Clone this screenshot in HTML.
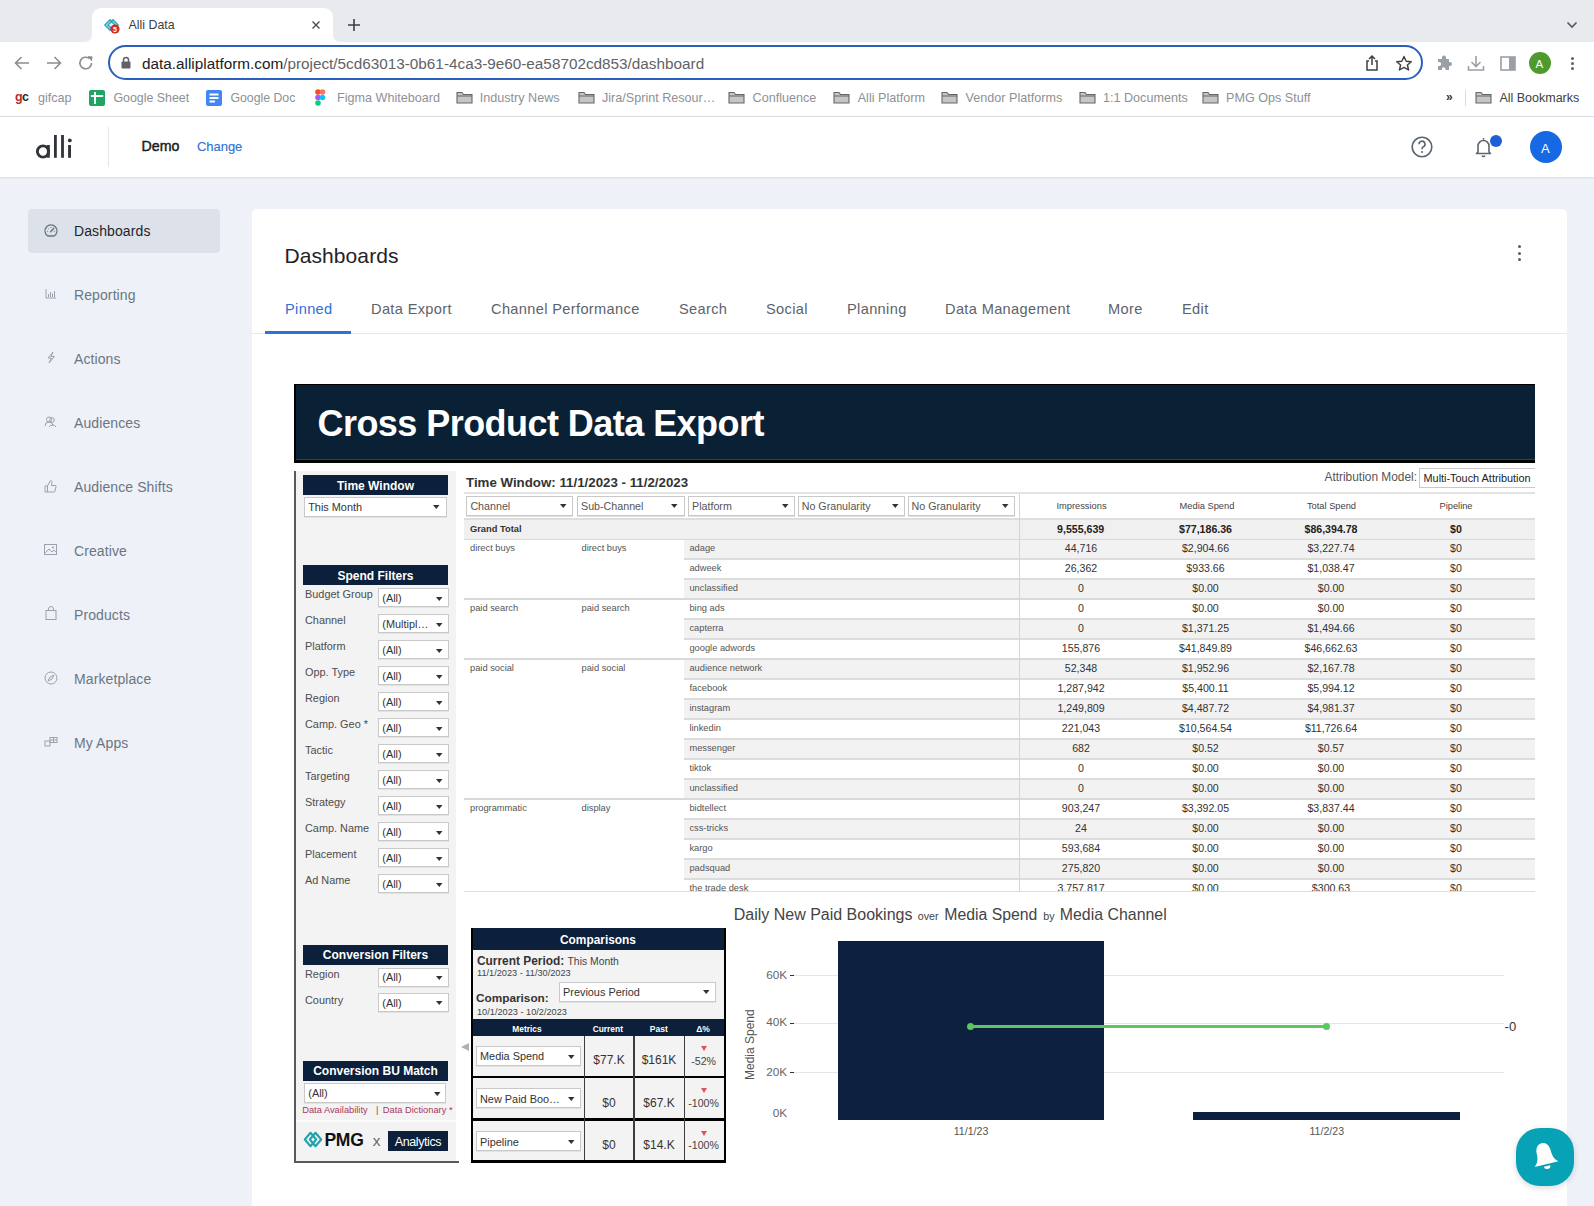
<!DOCTYPE html>
<html><head><meta charset="utf-8"><title>Alli Data</title><style>*{box-sizing:border-box;margin:0;padding:0}
html,body{width:1594px;height:1206px;overflow:hidden;background:#eef1f7;font-family:"Liberation Sans",sans-serif;position:relative}
.a{position:absolute}
.t{position:absolute;white-space:nowrap;line-height:1}
svg.a{overflow:visible}</style></head><body>
<div class="a" style="left:0px;top:0px;width:1594px;height:42px;background:#e8eaed"></div>
<div class="a" style="left:92px;top:8px;width:241px;height:34px;background:#fff;border-radius:9px 9px 0 0"></div>
<svg class="a" style="left:84px;top:34px;" width="8" height="8" viewBox="0 0 8 8"><path d="M0 8 Q8 8 8 0 L8 8 Z" fill="#fff"/></svg>
<svg class="a" style="left:333px;top:34px;" width="8" height="8" viewBox="0 0 8 8"><path d="M8 8 Q0 8 0 0 L0 8 Z" fill="#fff"/></svg>
<svg class="a" style="left:103px;top:18px;" width="18" height="16" viewBox="0 0 18 16"><g fill="none" stroke="#2aa7b8" stroke-width="1.6"><path d="M2 7 L7 2 L12 7 L7 12 Z"/><path d="M5 7 L10 2 L15 7 L10 12 Z"/></g><circle cx="12" cy="11" r="4.6" fill="#d22a2a"/><text x="12" y="14" font-size="7" font-family="Liberation Sans" font-weight="bold" fill="#fff" text-anchor="middle">5</text></svg>
<div class="t " style="left:128.5px;top:19.10px;font-size:12.4px;color:#3c4043;">Alli Data</div>
<svg class="a" style="left:311px;top:20px;" width="10" height="10" viewBox="0 0 10 10"><path d="M1.5 1.5 L8.5 8.5 M8.5 1.5 L1.5 8.5" stroke="#4a4d51" stroke-width="1.4"/></svg>
<svg class="a" style="left:347px;top:18px;" width="14" height="14" viewBox="0 0 14 14"><path d="M7 1 V13 M1 7 H13" stroke="#3c4043" stroke-width="1.6"/></svg>
<svg class="a" style="left:1566px;top:20px;" width="12" height="10" viewBox="0 0 12 10"><path d="M1.5 2.5 L6 7 L10.5 2.5" fill="none" stroke="#55595e" stroke-width="1.6"/></svg>
<div class="a" style="left:0px;top:42px;width:1594px;height:38px;background:#fff"></div>
<svg class="a" style="left:13px;top:55px;" width="17" height="16" viewBox="0 0 17 16"><path d="M16 8 H2.5 M8.5 2 L2.5 8 L8.5 14" fill="none" stroke="#8a8d91" stroke-width="1.6"/></svg>
<svg class="a" style="left:46px;top:55px;" width="17" height="16" viewBox="0 0 17 16"><path d="M1 8 H14.5 M8.5 2 L14.5 8 L8.5 14" fill="none" stroke="#8a8d91" stroke-width="1.6"/></svg>
<svg class="a" style="left:78px;top:55px;" width="17" height="16" viewBox="0 0 17 16"><path d="M13.5 8 A5.8 5.8 0 1 1 11.6 3.7" fill="none" stroke="#8a8d91" stroke-width="1.6"/><path d="M9.5 1 L14.5 1.5 L14 6.5 Z" fill="#8a8d91"/></svg>
<div class="a" style="left:108px;top:45px;width:1315px;height:35px;border:2px solid #2a5fbd;border-radius:18px;background:#fff"></div>
<svg class="a" style="left:120px;top:56px;" width="12" height="13" viewBox="0 0 12 13"><rect x="1.5" y="5.5" width="9" height="7" rx="1" fill="#5f6368"/><path d="M3.5 6 V4 A2.5 2.5 0 0 1 8.5 4 V6" fill="none" stroke="#5f6368" stroke-width="1.5"/></svg>
<div class="t " style="left:142px;top:55.65px;font-size:15.3px;color:#202124;">data.alliplatform.com<span style="color:#5f6368">/project/5cd63013-0b61-4ca3-9e60-ea58702cd853/dashboard</span></div>
<svg class="a" style="left:1364px;top:54px;" width="16" height="18" viewBox="0 0 16 18"><path d="M5 7 H3 V16 H13 V7 H11" fill="none" stroke="#3c4043" stroke-width="1.5"/><path d="M8 11 V2 M5 5 L8 2 L11 5" fill="none" stroke="#3c4043" stroke-width="1.5"/></svg>
<svg class="a" style="left:1395px;top:55px;" width="18" height="16" viewBox="0 0 18 16"><path d="M9 1.5 L11.2 6.2 L16.3 6.7 L12.4 10 L13.6 15 L9 12.4 L4.4 15 L5.6 10 L1.7 6.7 L6.8 6.2 Z" fill="none" stroke="#3c4043" stroke-width="1.4" stroke-linejoin="round"/></svg>
<svg class="a" style="left:1436px;top:55px;" width="17" height="17" viewBox="0 0 17 17"><path d="M6 2.5 a2 2 0 0 1 4 0 V4 H13 V7 h1 a2 2 0 0 1 0 4 h-1 V15 H9.5 v-1 a1.8 1.8 0 0 0 -3.6 0 v1 H2 V11 h1.2 a2 2 0 0 0 0 -4 H2 V4 H6 Z" fill="#9aa0a6"/></svg>
<svg class="a" style="left:1466px;top:54px;" width="20" height="18" viewBox="0 0 20 18"><path d="M10 2 V12 M5.5 8 L10 12.5 L14.5 8" fill="none" stroke="#9aa0a6" stroke-width="1.6"/><path d="M2.5 12 V16 H17.5 V12" fill="none" stroke="#9aa0a6" stroke-width="1.6"/></svg>
<svg class="a" style="left:1500px;top:56px;" width="16" height="15" viewBox="0 0 16 15"><rect x="1" y="1" width="14" height="13" fill="none" stroke="#9aa0a6" stroke-width="1.6"/><rect x="9" y="1" width="6" height="13" fill="#9aa0a6"/></svg>
<div class="a" style="left:1529px;top:52px;width:22px;height:22px;border-radius:50%;background:#4f9a2c"></div>
<div class="t " style="left:1535.5px;top:58.87px;font-size:11.5px;color:#fff;">A</div>
<div class="a" style="left:1571px;top:57px;width:3px;height:3px;background:#5f6368;border-radius:50%"></div>
<div class="a" style="left:1571px;top:62px;width:3px;height:3px;background:#5f6368;border-radius:50%"></div>
<div class="a" style="left:1571px;top:67px;width:3px;height:3px;background:#5f6368;border-radius:50%"></div>
<div class="a" style="left:0px;top:80px;width:1594px;height:36px;background:#fff"></div>
<div class="a" style="left:0px;top:116px;width:1594px;height:1px;background:#dadce0"></div>
<div class="t" style="left:15px;top:90.6px;font-size:12.5px;font-weight:bold;color:#b52a30;letter-spacing:-0.6px">g<span style="color:#2a2a2a">c</span></div>
<div class="t " style="left:38px;top:91.93px;font-size:12.6px;color:#8d9196;">gifcap</div>
<svg class="a" style="left:89px;top:90px;" width="16" height="16" viewBox="0 0 16 16"><rect x="0" y="0" width="16" height="16" rx="2" fill="#1fa463"/><path d="M1.8 6 H14.2 M6 2 V14" stroke="#fff" stroke-width="1.9"/></svg>
<div class="t " style="left:113.4px;top:92.10px;font-size:12.4px;color:#8d9196;">Google Sheet</div>
<svg class="a" style="left:206px;top:90px;" width="16" height="16" viewBox="0 0 16 16"><rect x="0" y="0" width="16" height="16" rx="2" fill="#4285f4"/><path d="M3.5 4.5 H12.5 M3.5 8 H12.5 M3.5 11.5 H9" stroke="#fff" stroke-width="1.8"/></svg>
<div class="t " style="left:230.4px;top:92.19px;font-size:12.3px;color:#8d9196;">Google Doc</div>
<svg class="a" style="left:315px;top:89px;" width="11" height="17" viewBox="0 0 11 17"><circle cx="3" cy="3" r="2.8" fill="#f24e1e"/><circle cx="7.5" cy="3" r="2.8" fill="#ff7262"/><circle cx="3" cy="8.5" r="2.8" fill="#a259ff"/><circle cx="7.5" cy="8.5" r="2.8" fill="#1abcfe"/><circle cx="3" cy="14" r="2.8" fill="#0acf83"/></svg>
<div class="t " style="left:337px;top:91.93px;font-size:12.6px;color:#8d9196;">Figma Whiteboard</div>
<svg class="a" style="left:455.7px;top:91px;" width="17" height="13" viewBox="0 0 17 13"><path d="M1 1.5 H6 L7.5 3.5 H16 V12 H1 Z" fill="#c6c6c6" stroke="#666" stroke-width="1.1"/><path d="M1 5 H16" stroke="#666" stroke-width="1"/></svg>
<div class="t " style="left:479.8px;top:91.93px;font-size:12.6px;color:#8d9196;">Industry News</div>
<svg class="a" style="left:577.7px;top:91px;" width="17" height="13" viewBox="0 0 17 13"><path d="M1 1.5 H6 L7.5 3.5 H16 V12 H1 Z" fill="#c6c6c6" stroke="#666" stroke-width="1.1"/><path d="M1 5 H16" stroke="#666" stroke-width="1"/></svg>
<div class="t " style="left:602px;top:91.93px;font-size:12.6px;color:#8d9196;">Jira/Sprint Resour…</div>
<svg class="a" style="left:728.2px;top:91px;" width="17" height="13" viewBox="0 0 17 13"><path d="M1 1.5 H6 L7.5 3.5 H16 V12 H1 Z" fill="#c6c6c6" stroke="#666" stroke-width="1.1"/><path d="M1 5 H16" stroke="#666" stroke-width="1"/></svg>
<div class="t " style="left:752.6px;top:91.93px;font-size:12.6px;color:#8d9196;">Confluence</div>
<svg class="a" style="left:833.4px;top:91px;" width="17" height="13" viewBox="0 0 17 13"><path d="M1 1.5 H6 L7.5 3.5 H16 V12 H1 Z" fill="#c6c6c6" stroke="#666" stroke-width="1.1"/><path d="M1 5 H16" stroke="#666" stroke-width="1"/></svg>
<div class="t " style="left:857.7px;top:91.93px;font-size:12.6px;color:#8d9196;">Alli Platform</div>
<svg class="a" style="left:941px;top:91px;" width="17" height="13" viewBox="0 0 17 13"><path d="M1 1.5 H6 L7.5 3.5 H16 V12 H1 Z" fill="#c6c6c6" stroke="#666" stroke-width="1.1"/><path d="M1 5 H16" stroke="#666" stroke-width="1"/></svg>
<div class="t " style="left:965.6px;top:91.93px;font-size:12.6px;color:#8d9196;">Vendor Platforms</div>
<svg class="a" style="left:1079px;top:91px;" width="17" height="13" viewBox="0 0 17 13"><path d="M1 1.5 H6 L7.5 3.5 H16 V12 H1 Z" fill="#c6c6c6" stroke="#666" stroke-width="1.1"/><path d="M1 5 H16" stroke="#666" stroke-width="1"/></svg>
<div class="t " style="left:1103px;top:91.93px;font-size:12.6px;color:#8d9196;">1:1 Documents</div>
<svg class="a" style="left:1202px;top:91px;" width="17" height="13" viewBox="0 0 17 13"><path d="M1 1.5 H6 L7.5 3.5 H16 V12 H1 Z" fill="#c6c6c6" stroke="#666" stroke-width="1.1"/><path d="M1 5 H16" stroke="#666" stroke-width="1"/></svg>
<div class="t " style="left:1226px;top:91.93px;font-size:12.6px;color:#8d9196;">PMG Ops Stuff</div>
<div class="t " style="left:1446px;top:91.44px;font-size:12px;color:#333;font-weight:bold;">»</div>
<div class="a" style="left:1465px;top:90px;width:1px;height:16px;background:#dadce0"></div>
<svg class="a" style="left:1474.5px;top:91px;" width="17" height="13" viewBox="0 0 17 13"><path d="M1 1.5 H6 L7.5 3.5 H16 V12 H1 Z" fill="#c6c6c6" stroke="#666" stroke-width="1.1"/><path d="M1 5 H16" stroke="#666" stroke-width="1"/></svg>
<div class="t " style="left:1499.4px;top:92.02px;font-size:12.5px;color:#3c4043;">All Bookmarks</div>
<div class="a" style="left:0px;top:117px;width:1594px;height:60px;background:#fff"></div>
<div class="a" style="left:0px;top:177px;width:1594px;height:1px;background:#dfe2e8"></div>
<div class="a" style="left:0px;top:178px;width:1594px;height:1px;background:#e7eaf0"></div>
<svg class="a" style="left:34px;top:133px;" width="40" height="27" viewBox="0 0 40 27"><circle cx="9" cy="18.5" r="5.6" fill="none" stroke="#30353b" stroke-width="2.9"/><rect x="12.9" y="12" width="2.9" height="12.7" fill="#30353b"/><rect x="20" y="2" width="2.8" height="22.8" fill="#30353b"/><rect x="27.1" y="2" width="2.8" height="22.8" fill="#30353b"/><rect x="34.1" y="12" width="2.9" height="12.8" fill="#30353b"/><circle cx="35.8" cy="7.4" r="1.9" fill="#30353b"/></svg>
<div class="a" style="left:108px;top:127px;width:1px;height:40px;background:#e3e5ea"></div>
<div class="t " style="left:141.5px;top:138.78px;font-size:14.2px;color:#1a1d22;-webkit-text-stroke:0.45px #1a1d22">Demo</div>
<div class="t " style="left:197px;top:139.80px;font-size:13px;color:#3173d6;letter-spacing:-0.05px;-webkit-text-stroke:0.15px #3173d6">Change</div>
<svg class="a" style="left:1411px;top:136px;" width="22" height="22" viewBox="0 0 22 22"><circle cx="11" cy="11" r="9.8" fill="none" stroke="#5c6670" stroke-width="1.6"/><path d="M8 8.3 A3 3 0 1 1 12 11 Q11 11.6 11 13.2" fill="none" stroke="#5c6670" stroke-width="1.6"/><circle cx="11" cy="16" r="1" fill="#5c6670"/></svg>
<svg class="a" style="left:1475px;top:136px;" width="17" height="23" viewBox="0 0 17 23"><path d="M8.5 2 V3.5 M3 16 V10 A5.5 5.5 0 0 1 14 10 V16 L15.5 17.5 H1.5 Z" fill="none" stroke="#5c6670" stroke-width="1.6" stroke-linejoin="round"/><path d="M7 19.5 A1.6 1.6 0 0 0 10 19.5" fill="none" stroke="#5c6670" stroke-width="1.5"/></svg>
<div class="a" style="left:1490px;top:135px;width:12px;height:12px;border-radius:50%;background:#1f5fd6"></div>
<div class="a" style="left:1530px;top:131px;width:32px;height:32px;border-radius:50%;background:#1668e3"></div>
<div class="t " style="left:1541px;top:141.60px;font-size:13px;color:#fff;">A</div>
<div class="a" style="left:28px;top:209px;width:192px;height:44px;background:#dde2ea;border-radius:4px"></div>
<div class="t " style="left:74px;top:223.75px;font-size:14px;color:#1f242b;letter-spacing:0.1px">Dashboards</div>
<div class="t " style="left:74px;top:287.75px;font-size:14px;color:#6b7683;letter-spacing:0.1px">Reporting</div>
<div class="t " style="left:74px;top:351.75px;font-size:14px;color:#6b7683;letter-spacing:0.1px">Actions</div>
<div class="t " style="left:74px;top:415.75px;font-size:14px;color:#6b7683;letter-spacing:0.1px">Audiences</div>
<div class="t " style="left:74px;top:479.75px;font-size:14px;color:#6b7683;letter-spacing:0.1px">Audience Shifts</div>
<div class="t " style="left:74px;top:543.75px;font-size:14px;color:#6b7683;letter-spacing:0.1px">Creative</div>
<div class="t " style="left:74px;top:607.75px;font-size:14px;color:#6b7683;letter-spacing:0.1px">Products</div>
<div class="t " style="left:74px;top:671.75px;font-size:14px;color:#6b7683;letter-spacing:0.1px">Marketplace</div>
<div class="t " style="left:74px;top:735.75px;font-size:14px;color:#6b7683;letter-spacing:0.1px">My Apps</div>
<svg class="a" style="left:44px;top:223px;" width="14" height="15" viewBox="0 0 14 15"><path d="M3.9 13 A6 6 0 1 1 10.1 13 Z" fill="none" stroke="#6b7480" stroke-width="1.3" stroke-linejoin="round"/><path d="M6.8 8.6 L9.6 5.4" stroke="#6b7480" stroke-width="1.5" stroke-linecap="round"/><path d="M3.2 8.4 H4.2 M9.8 8.4 H10.8 M4.4 5.6 L5 6.2 M7 4 V4.8" stroke="#6b7480" stroke-width="0.9"/></svg>
<svg class="a" style="left:45px;top:288px;" width="12" height="11" viewBox="0 0 12 11"><path d="M1 1 V10 H11 M3.5 9 V6 M5.5 9 V4 M7.5 9 V5.5 M9.5 9 V3" fill="none" stroke="#9aa3ad" stroke-width="1"/></svg>
<svg class="a" style="left:46px;top:351px;" width="10" height="13" viewBox="0 0 10 13"><path d="M7 1 L2 7 H5.5 L3 12 L8.5 5.5 H5 Z" fill="none" stroke="#9aa3ad" stroke-width="1"/></svg>
<svg class="a" style="left:44px;top:415px;" width="13" height="13" viewBox="0 0 13 13"><circle cx="5" cy="4.5" r="2.5" fill="none" stroke="#9aa3ad" stroke-width="1"/><path d="M1 11 A4 4 0 0 1 9 11" fill="none" stroke="#9aa3ad" stroke-width="1"/><circle cx="8" cy="5" r="2.3" fill="none" stroke="#9aa3ad" stroke-width="1"/><path d="M5 12 A4 4 0 0 1 12 12" fill="none" stroke="#9aa3ad" stroke-width="1"/></svg>
<svg class="a" style="left:44px;top:479px;" width="13" height="14" viewBox="0 0 13 14"><path d="M1 7 H3.5 V13 H1 Z M3.5 7 L6 2 A1.2 1.2 0 0 1 8 3 L7.5 6.5 H11 A1 1 0 0 1 12 7.8 L11 12 A1.2 1.2 0 0 1 10 13 H3.5" fill="none" stroke="#9aa3ad" stroke-width="1"/></svg>
<svg class="a" style="left:44px;top:543px;" width="13" height="12" viewBox="0 0 13 12"><rect x="0.5" y="1.5" width="12" height="10" fill="none" stroke="#9aa3ad" stroke-width="1"/><path d="M1 10 L5 6 L8 9 L10 7 L12.5 9.5" fill="none" stroke="#9aa3ad" stroke-width="1"/><circle cx="9" cy="4.5" r="1" fill="#9aa3ad"/></svg>
<svg class="a" style="left:45px;top:606px;" width="12" height="14" viewBox="0 0 12 14"><rect x="1" y="4.5" width="10" height="9" fill="none" stroke="#9aa3ad" stroke-width="1"/><path d="M3.5 4.5 V3 A2.5 2.5 0 0 1 8.5 3 V4.5" fill="none" stroke="#9aa3ad" stroke-width="1"/></svg>
<svg class="a" style="left:44px;top:671px;" width="14" height="14" viewBox="0 0 14 14"><circle cx="7" cy="7" r="6" fill="none" stroke="#9aa3ad" stroke-width="1"/><path d="M10 4 L8 8 L4 10 L6 6 Z" fill="none" stroke="#9aa3ad" stroke-width="1"/></svg>
<svg class="a" style="left:44px;top:736px;" width="14" height="12" viewBox="0 0 14 12"><rect x="1" y="5" width="5" height="5" fill="none" stroke="#9aa3ad" stroke-width="1"/><rect x="6" y="1.5" width="7" height="5" fill="none" stroke="#9aa3ad" stroke-width="1"/><path d="M9.5 1.5 V6.5 M6 4 H13" stroke="#9aa3ad" stroke-width="1"/></svg>
<div class="a" style="left:252px;top:209px;width:1315px;height:1010px;background:#fff;border-radius:5px"></div>
<div class="t " style="left:284.4px;top:244.62px;font-size:21px;color:#1f2329;letter-spacing:0.1px">Dashboards</div>
<div class="t " style="left:285px;top:302.24px;font-size:14.6px;color:#2f6fd6;letter-spacing:0.35px">Pinned</div>
<div class="t " style="left:371px;top:302.24px;font-size:14.6px;color:#5d636b;letter-spacing:0.35px">Data Export</div>
<div class="t " style="left:491px;top:302.24px;font-size:14.6px;color:#5d636b;letter-spacing:0.35px">Channel Performance</div>
<div class="t " style="left:679px;top:302.24px;font-size:14.6px;color:#5d636b;letter-spacing:0.35px">Search</div>
<div class="t " style="left:766px;top:302.24px;font-size:14.6px;color:#5d636b;letter-spacing:0.35px">Social</div>
<div class="t " style="left:847px;top:302.24px;font-size:14.6px;color:#5d636b;letter-spacing:0.35px">Planning</div>
<div class="t " style="left:945px;top:302.24px;font-size:14.6px;color:#5d636b;letter-spacing:0.35px">Data Management</div>
<div class="t " style="left:1108px;top:302.24px;font-size:14.6px;color:#5d636b;letter-spacing:0.35px">More</div>
<div class="t " style="left:1182px;top:302.24px;font-size:14.6px;color:#5d636b;letter-spacing:0.35px">Edit</div>
<div class="a" style="left:252px;top:333px;width:1315px;height:1px;background:#e6e8ec"></div>
<div class="a" style="left:265px;top:331px;width:86px;height:3px;background:#2f6fd6"></div>
<div class="a" style="left:1517.5px;top:244.5px;width:3px;height:3px;background:#555c66;border-radius:50%"></div>
<div class="a" style="left:1517.5px;top:251.5px;width:3px;height:3px;background:#555c66;border-radius:50%"></div>
<div class="a" style="left:1517.5px;top:257.5px;width:3px;height:3px;background:#555c66;border-radius:50%"></div>
<div class="a" style="left:294px;top:384px;width:1241px;height:79px;background:#000"></div>
<div class="a" style="left:296px;top:385px;width:1239px;height:74px;background:#0a2135"></div>
<div class="a" style="left:296px;top:459px;width:1239px;height:1px;background:#3b4046"></div>
<div class="t " style="left:317.5px;top:405.93px;font-size:36px;color:#fff;font-weight:bold;letter-spacing:-0.55px">Cross Product Data Export</div>
<div class="a" style="left:296px;top:471px;width:160px;height:690px;background:#f3f3f3"></div>
<div class="a" style="left:294px;top:471px;width:2px;height:692px;background:#5a5a5a"></div>
<div class="a" style="left:294px;top:1161px;width:165px;height:2px;background:#5a5a5a"></div>
<div class="a" style="left:303px;top:475px;width:145px;height:20px;background:#0d203b"></div>
<div class="t" style="left:75.5px;width:600px;text-align:center;top:479.94px;font-size:12px;color:#fff;font-weight:bold;">Time Window</div>
<div class="a" style="left:304px;top:497px;width:143px;height:19.5px;background:#fff;border:1px solid #c9c9c9;box-shadow:0 1px 0 #e2e2e2"></div>
<div class="t " style="left:308.2px;top:501.67px;font-size:10.9px;color:#333;">This Month</div>
<svg class="a" style="left:433.35px;top:505.4px;" width="6.5" height="4" viewBox="0 0 6.5 4"><path d="M0 0 H6.5 L3.25 4 Z" fill="#333"/></svg>
<div class="a" style="left:303px;top:565px;width:145px;height:20px;background:#0d203b"></div>
<div class="t" style="left:75.5px;width:600px;text-align:center;top:569.74px;font-size:12px;color:#fff;font-weight:bold;">Spend Filters</div>
<div class="t " style="left:305px;top:589.27px;font-size:10.9px;color:#4d4d4d;">Budget Group</div>
<div class="a" style="left:378px;top:588.2px;width:70.5px;height:19px;background:#fff;border:1px solid #c9c9c9;box-shadow:0 1px 0 #e2e2e2"></div>
<div class="t " style="left:382.3px;top:592.97px;font-size:10.9px;color:#333;">(All)</div>
<svg class="a" style="left:435.75px;top:596.6px;" width="6.5" height="4" viewBox="0 0 6.5 4"><path d="M0 0 H6.5 L3.25 4 Z" fill="#333"/></svg>
<div class="t " style="left:305px;top:615.27px;font-size:10.9px;color:#4d4d4d;">Channel</div>
<div class="a" style="left:378px;top:614.2px;width:70.5px;height:19px;background:#fff;border:1px solid #c9c9c9;box-shadow:0 1px 0 #e2e2e2"></div>
<div class="t " style="left:382.3px;top:618.97px;font-size:10.9px;color:#333;">(Multipl…</div>
<svg class="a" style="left:435.75px;top:622.6px;" width="6.5" height="4" viewBox="0 0 6.5 4"><path d="M0 0 H6.5 L3.25 4 Z" fill="#333"/></svg>
<div class="t " style="left:305px;top:641.27px;font-size:10.9px;color:#4d4d4d;">Platform</div>
<div class="a" style="left:378px;top:640.2px;width:70.5px;height:19px;background:#fff;border:1px solid #c9c9c9;box-shadow:0 1px 0 #e2e2e2"></div>
<div class="t " style="left:382.3px;top:644.97px;font-size:10.9px;color:#333;">(All)</div>
<svg class="a" style="left:435.75px;top:648.6px;" width="6.5" height="4" viewBox="0 0 6.5 4"><path d="M0 0 H6.5 L3.25 4 Z" fill="#333"/></svg>
<div class="t " style="left:305px;top:667.27px;font-size:10.9px;color:#4d4d4d;">Opp. Type</div>
<div class="a" style="left:378px;top:666.2px;width:70.5px;height:19px;background:#fff;border:1px solid #c9c9c9;box-shadow:0 1px 0 #e2e2e2"></div>
<div class="t " style="left:382.3px;top:670.97px;font-size:10.9px;color:#333;">(All)</div>
<svg class="a" style="left:435.75px;top:674.6px;" width="6.5" height="4" viewBox="0 0 6.5 4"><path d="M0 0 H6.5 L3.25 4 Z" fill="#333"/></svg>
<div class="t " style="left:305px;top:693.27px;font-size:10.9px;color:#4d4d4d;">Region</div>
<div class="a" style="left:378px;top:692.2px;width:70.5px;height:19px;background:#fff;border:1px solid #c9c9c9;box-shadow:0 1px 0 #e2e2e2"></div>
<div class="t " style="left:382.3px;top:696.97px;font-size:10.9px;color:#333;">(All)</div>
<svg class="a" style="left:435.75px;top:700.6px;" width="6.5" height="4" viewBox="0 0 6.5 4"><path d="M0 0 H6.5 L3.25 4 Z" fill="#333"/></svg>
<div class="t " style="left:305px;top:719.27px;font-size:10.9px;color:#4d4d4d;">Camp. Geo *</div>
<div class="a" style="left:378px;top:718.2px;width:70.5px;height:19px;background:#fff;border:1px solid #c9c9c9;box-shadow:0 1px 0 #e2e2e2"></div>
<div class="t " style="left:382.3px;top:722.97px;font-size:10.9px;color:#333;">(All)</div>
<svg class="a" style="left:435.75px;top:726.6px;" width="6.5" height="4" viewBox="0 0 6.5 4"><path d="M0 0 H6.5 L3.25 4 Z" fill="#333"/></svg>
<div class="t " style="left:305px;top:745.27px;font-size:10.9px;color:#4d4d4d;">Tactic</div>
<div class="a" style="left:378px;top:744.2px;width:70.5px;height:19px;background:#fff;border:1px solid #c9c9c9;box-shadow:0 1px 0 #e2e2e2"></div>
<div class="t " style="left:382.3px;top:748.97px;font-size:10.9px;color:#333;">(All)</div>
<svg class="a" style="left:435.75px;top:752.6px;" width="6.5" height="4" viewBox="0 0 6.5 4"><path d="M0 0 H6.5 L3.25 4 Z" fill="#333"/></svg>
<div class="t " style="left:305px;top:771.27px;font-size:10.9px;color:#4d4d4d;">Targeting</div>
<div class="a" style="left:378px;top:770.2px;width:70.5px;height:19px;background:#fff;border:1px solid #c9c9c9;box-shadow:0 1px 0 #e2e2e2"></div>
<div class="t " style="left:382.3px;top:774.97px;font-size:10.9px;color:#333;">(All)</div>
<svg class="a" style="left:435.75px;top:778.6px;" width="6.5" height="4" viewBox="0 0 6.5 4"><path d="M0 0 H6.5 L3.25 4 Z" fill="#333"/></svg>
<div class="t " style="left:305px;top:797.27px;font-size:10.9px;color:#4d4d4d;">Strategy</div>
<div class="a" style="left:378px;top:796.2px;width:70.5px;height:19px;background:#fff;border:1px solid #c9c9c9;box-shadow:0 1px 0 #e2e2e2"></div>
<div class="t " style="left:382.3px;top:800.97px;font-size:10.9px;color:#333;">(All)</div>
<svg class="a" style="left:435.75px;top:804.6px;" width="6.5" height="4" viewBox="0 0 6.5 4"><path d="M0 0 H6.5 L3.25 4 Z" fill="#333"/></svg>
<div class="t " style="left:305px;top:823.27px;font-size:10.9px;color:#4d4d4d;">Camp. Name</div>
<div class="a" style="left:378px;top:822.2px;width:70.5px;height:19px;background:#fff;border:1px solid #c9c9c9;box-shadow:0 1px 0 #e2e2e2"></div>
<div class="t " style="left:382.3px;top:826.97px;font-size:10.9px;color:#333;">(All)</div>
<svg class="a" style="left:435.75px;top:830.6px;" width="6.5" height="4" viewBox="0 0 6.5 4"><path d="M0 0 H6.5 L3.25 4 Z" fill="#333"/></svg>
<div class="t " style="left:305px;top:849.27px;font-size:10.9px;color:#4d4d4d;">Placement</div>
<div class="a" style="left:378px;top:848.2px;width:70.5px;height:19px;background:#fff;border:1px solid #c9c9c9;box-shadow:0 1px 0 #e2e2e2"></div>
<div class="t " style="left:382.3px;top:852.97px;font-size:10.9px;color:#333;">(All)</div>
<svg class="a" style="left:435.75px;top:856.6px;" width="6.5" height="4" viewBox="0 0 6.5 4"><path d="M0 0 H6.5 L3.25 4 Z" fill="#333"/></svg>
<div class="t " style="left:305px;top:875.27px;font-size:10.9px;color:#4d4d4d;">Ad Name</div>
<div class="a" style="left:378px;top:874.2px;width:70.5px;height:19px;background:#fff;border:1px solid #c9c9c9;box-shadow:0 1px 0 #e2e2e2"></div>
<div class="t " style="left:382.3px;top:878.97px;font-size:10.9px;color:#333;">(All)</div>
<svg class="a" style="left:435.75px;top:882.6px;" width="6.5" height="4" viewBox="0 0 6.5 4"><path d="M0 0 H6.5 L3.25 4 Z" fill="#333"/></svg>
<div class="a" style="left:303px;top:945px;width:145px;height:20px;background:#0d203b"></div>
<div class="t" style="left:75.5px;width:600px;text-align:center;top:949.24px;font-size:12px;color:#fff;font-weight:bold;">Conversion Filters</div>
<div class="t " style="left:305px;top:968.77px;font-size:10.9px;color:#4d4d4d;">Region</div>
<div class="a" style="left:378px;top:967.7px;width:70.5px;height:19px;background:#fff;border:1px solid #c9c9c9;box-shadow:0 1px 0 #e2e2e2"></div>
<div class="t " style="left:382.3px;top:972.47px;font-size:10.9px;color:#333;">(All)</div>
<svg class="a" style="left:435.75px;top:975.8px;" width="6.5" height="4" viewBox="0 0 6.5 4"><path d="M0 0 H6.5 L3.25 4 Z" fill="#333"/></svg>
<div class="t " style="left:305px;top:994.67px;font-size:10.9px;color:#4d4d4d;">Country</div>
<div class="a" style="left:378px;top:993.3px;width:70.5px;height:19px;background:#fff;border:1px solid #c9c9c9;box-shadow:0 1px 0 #e2e2e2"></div>
<div class="t " style="left:382.3px;top:998.07px;font-size:10.9px;color:#333;">(All)</div>
<svg class="a" style="left:435.75px;top:1001.4px;" width="6.5" height="4" viewBox="0 0 6.5 4"><path d="M0 0 H6.5 L3.25 4 Z" fill="#333"/></svg>
<div class="a" style="left:303px;top:1061px;width:145px;height:20px;background:#0d203b"></div>
<div class="t" style="left:75.5px;width:600px;text-align:center;top:1065.24px;font-size:12px;color:#fff;font-weight:bold;">Conversion BU Match</div>
<div class="a" style="left:304px;top:1083px;width:142px;height:19.5px;background:#fff;border:1px solid #c9c9c9;box-shadow:0 1px 0 #e2e2e2"></div>
<div class="t " style="left:308.3px;top:1087.77px;font-size:10.9px;color:#333;">(All)</div>
<svg class="a" style="left:433.55px;top:1091.6px;" width="6.5" height="4" viewBox="0 0 6.5 4"><path d="M0 0 H6.5 L3.25 4 Z" fill="#333"/></svg>
<div class="t " style="left:302.2px;top:1106.03px;font-size:9.3px;color:#a8385e;">Data Availability</div>
<div class="t " style="left:376px;top:1106.03px;font-size:9.3px;color:#a8385e;">|</div>
<div class="t " style="left:382.8px;top:1106.03px;font-size:9.3px;color:#a8385e;">Data Dictionary *</div>
<div class="a" style="left:296px;top:1120px;width:160px;height:2px;background:#fbfbfb"></div>
<svg class="a" style="left:303px;top:1131px;" width="21" height="17" viewBox="0 0 21 17"><g fill="none" stroke="#22a2ab" stroke-width="2.1" stroke-linejoin="round"><path d="M7.5 1.8 L13.2 8.5 L7.5 15.2 L1.8 8.5 Z"/><path d="M12.5 1.8 L18.2 8.5 L12.5 15.2 L6.8 8.5 Z"/></g></svg>
<div class="t " style="left:324.5px;top:1132.29px;font-size:17.5px;color:#111;font-weight:bold;letter-spacing:-0.3px">PMG</div>
<div class="t " style="left:372.8px;top:1133.08px;font-size:15.5px;color:#6a6a6a;">x</div>
<div class="a" style="left:388px;top:1131px;width:60px;height:20px;background:#0d203b"></div>
<div class="t" style="left:118px;width:600px;text-align:center;top:1135.52px;font-size:12.5px;color:#fff;letter-spacing:-0.4px">Analytics</div>
<svg class="a" style="left:461px;top:1043px;" width="8" height="8" viewBox="0 0 8 8"><path d="M8 0 V8 L0 4 Z" fill="#b0b0b0"/></svg>
<div class="t " style="left:466px;top:476.04px;font-size:13.3px;color:#333;font-weight:bold;">Time Window: 11/1/2023 - 11/2/2023</div>
<div class="t" style="left:817px;width:600px;text-align:right;top:471.93px;font-size:11.9px;color:#555;">Attribution Model:</div>
<div class="a" style="left:1419px;top:468px;width:116px;height:20px;background:#fff;border:1px solid #c9c9c9;border-right:none"></div>
<div class="t " style="left:1423.5px;top:472.77px;font-size:10.9px;color:#222;">Multi-Touch Attribution</div>
<div class="a" style="left:464px;top:492px;width:1071px;height:2px;background:#e3e3e3"></div>
<div class="a" style="left:466.4px;top:496px;width:107.1px;height:19.5px;background:#fff;border:1px solid #c9c9c9;box-shadow:0 1px 0 #e2e2e2"></div>
<div class="t " style="left:470.4px;top:501.14px;font-size:10.7px;color:#555;">Channel</div>
<svg class="a" style="left:560.25px;top:504.2px;" width="6.5" height="4" viewBox="0 0 6.5 4"><path d="M0 0 H6.5 L3.25 4 Z" fill="#333"/></svg>
<div class="a" style="left:577px;top:496px;width:107.5px;height:19.5px;background:#fff;border:1px solid #c9c9c9;box-shadow:0 1px 0 #e2e2e2"></div>
<div class="t " style="left:581px;top:501.14px;font-size:10.7px;color:#555;">Sub-Channel</div>
<svg class="a" style="left:671.25px;top:504.2px;" width="6.5" height="4" viewBox="0 0 6.5 4"><path d="M0 0 H6.5 L3.25 4 Z" fill="#333"/></svg>
<div class="a" style="left:688px;top:496px;width:107px;height:19.5px;background:#fff;border:1px solid #c9c9c9;box-shadow:0 1px 0 #e2e2e2"></div>
<div class="t " style="left:692px;top:501.14px;font-size:10.7px;color:#555;">Platform</div>
<svg class="a" style="left:781.75px;top:504.2px;" width="6.5" height="4" viewBox="0 0 6.5 4"><path d="M0 0 H6.5 L3.25 4 Z" fill="#333"/></svg>
<div class="a" style="left:797.7px;top:496px;width:107.3px;height:19.5px;background:#fff;border:1px solid #c9c9c9;box-shadow:0 1px 0 #e2e2e2"></div>
<div class="t " style="left:801.7px;top:501.14px;font-size:10.7px;color:#555;">No Granularity</div>
<svg class="a" style="left:891.75px;top:504.2px;" width="6.5" height="4" viewBox="0 0 6.5 4"><path d="M0 0 H6.5 L3.25 4 Z" fill="#333"/></svg>
<div class="a" style="left:907.6px;top:496px;width:107.4px;height:19.5px;background:#fff;border:1px solid #c9c9c9;box-shadow:0 1px 0 #e2e2e2"></div>
<div class="t " style="left:911.6px;top:501.14px;font-size:10.7px;color:#555;">No Granularity</div>
<svg class="a" style="left:1001.75px;top:504.2px;" width="6.5" height="4" viewBox="0 0 6.5 4"><path d="M0 0 H6.5 L3.25 4 Z" fill="#333"/></svg>
<div class="t" style="left:781.5px;width:600px;text-align:center;top:502.23px;font-size:9.3px;color:#444;">Impressions</div>
<div class="t" style="left:907px;width:600px;text-align:center;top:502.23px;font-size:9.3px;color:#444;">Media Spend</div>
<div class="t" style="left:1031.5px;width:600px;text-align:center;top:502.23px;font-size:9.3px;color:#444;">Total Spend</div>
<div class="t" style="left:1156px;width:600px;text-align:center;top:502.23px;font-size:9.3px;color:#444;">Pipeline</div>
<div class="a" style="left:464px;top:518px;width:1071px;height:2px;background:#dedede"></div>
<div class="a" style="left:464px;top:520px;width:1071px;height:18.5px;background:#f0f0f0"></div>
<div class="t " style="left:470px;top:524.63px;font-size:9.3px;color:#333;font-weight:bold;">Grand Total</div>
<div class="t" style="left:780.7px;width:600px;text-align:center;top:523.53px;font-size:10.6px;color:#222;font-weight:bold;">9,555,639</div>
<div class="t" style="left:905.5px;width:600px;text-align:center;top:523.53px;font-size:10.6px;color:#222;font-weight:bold;">$77,186.36</div>
<div class="t" style="left:1031px;width:600px;text-align:center;top:523.53px;font-size:10.6px;color:#222;font-weight:bold;">$86,394.78</div>
<div class="t" style="left:1156px;width:600px;text-align:center;top:523.53px;font-size:10.6px;color:#222;font-weight:bold;">$0</div>
<div class="a" style="left:464px;top:538.5px;width:1071px;height:353px;overflow:hidden">
<div class="a" style="left:220px;top:0.5px;width:851px;height:20px;background:#f2f2f2"></div>
<div class="a" style="left:0px;top:-0.5px;width:1071px;height:1.5px;background:#d9d9d9"></div>
<div class="a" style="left:220px;top:19.5px;width:851px;height:1.5px;background:#dcdcdc"></div>
<div class="a" style="left:220px;top:40.5px;width:851px;height:20px;background:#f2f2f2"></div>
<div class="a" style="left:220px;top:39.5px;width:851px;height:1.5px;background:#dcdcdc"></div>
<div class="a" style="left:0px;top:59.5px;width:1071px;height:1.5px;background:#d9d9d9"></div>
<div class="a" style="left:220px;top:80.5px;width:851px;height:20px;background:#f2f2f2"></div>
<div class="a" style="left:220px;top:79.5px;width:851px;height:1.5px;background:#dcdcdc"></div>
<div class="a" style="left:220px;top:99.5px;width:851px;height:1.5px;background:#dcdcdc"></div>
<div class="a" style="left:220px;top:120.5px;width:851px;height:20px;background:#f2f2f2"></div>
<div class="a" style="left:0px;top:119.5px;width:1071px;height:1.5px;background:#d9d9d9"></div>
<div class="a" style="left:220px;top:139.5px;width:851px;height:1.5px;background:#dcdcdc"></div>
<div class="a" style="left:220px;top:160.5px;width:851px;height:20px;background:#f2f2f2"></div>
<div class="a" style="left:220px;top:159.5px;width:851px;height:1.5px;background:#dcdcdc"></div>
<div class="a" style="left:220px;top:179.5px;width:851px;height:1.5px;background:#dcdcdc"></div>
<div class="a" style="left:220px;top:200.5px;width:851px;height:20px;background:#f2f2f2"></div>
<div class="a" style="left:220px;top:199.5px;width:851px;height:1.5px;background:#dcdcdc"></div>
<div class="a" style="left:220px;top:219.5px;width:851px;height:1.5px;background:#dcdcdc"></div>
<div class="a" style="left:220px;top:240.5px;width:851px;height:20px;background:#f2f2f2"></div>
<div class="a" style="left:220px;top:239.5px;width:851px;height:1.5px;background:#dcdcdc"></div>
<div class="a" style="left:0px;top:259.5px;width:1071px;height:1.5px;background:#d9d9d9"></div>
<div class="a" style="left:220px;top:280.5px;width:851px;height:20px;background:#f2f2f2"></div>
<div class="a" style="left:220px;top:279.5px;width:851px;height:1.5px;background:#dcdcdc"></div>
<div class="a" style="left:220px;top:299.5px;width:851px;height:1.5px;background:#dcdcdc"></div>
<div class="a" style="left:220px;top:320.5px;width:851px;height:20px;background:#f2f2f2"></div>
<div class="a" style="left:220px;top:319.5px;width:851px;height:1.5px;background:#dcdcdc"></div>
<div class="a" style="left:220px;top:339.5px;width:851px;height:1.5px;background:#dcdcdc"></div>
</div>
<div class="t " style="left:470px;top:544.33px;font-size:9.3px;color:#555;">direct buys</div>
<div class="t " style="left:581.5px;top:544.33px;font-size:9.3px;color:#555;">direct buys</div>
<div class="t " style="left:689.4px;top:544.33px;font-size:9.3px;color:#555;">adage</div>
<div class="t" style="left:781px;width:600px;text-align:center;top:543.23px;font-size:10.6px;color:#333;">44,716</div>
<div class="t" style="left:905.5px;width:600px;text-align:center;top:543.23px;font-size:10.6px;color:#333;">$2,904.66</div>
<div class="t" style="left:1031px;width:600px;text-align:center;top:543.23px;font-size:10.6px;color:#333;">$3,227.74</div>
<div class="t" style="left:1156px;width:600px;text-align:center;top:543.23px;font-size:10.6px;color:#333;">$0</div>
<div class="t " style="left:689.4px;top:564.33px;font-size:9.3px;color:#555;">adweek</div>
<div class="t" style="left:781px;width:600px;text-align:center;top:563.23px;font-size:10.6px;color:#333;">26,362</div>
<div class="t" style="left:905.5px;width:600px;text-align:center;top:563.23px;font-size:10.6px;color:#333;">$933.66</div>
<div class="t" style="left:1031px;width:600px;text-align:center;top:563.23px;font-size:10.6px;color:#333;">$1,038.47</div>
<div class="t" style="left:1156px;width:600px;text-align:center;top:563.23px;font-size:10.6px;color:#333;">$0</div>
<div class="t " style="left:689.4px;top:584.33px;font-size:9.3px;color:#555;">unclassified</div>
<div class="t" style="left:781px;width:600px;text-align:center;top:583.23px;font-size:10.6px;color:#333;">0</div>
<div class="t" style="left:905.5px;width:600px;text-align:center;top:583.23px;font-size:10.6px;color:#333;">$0.00</div>
<div class="t" style="left:1031px;width:600px;text-align:center;top:583.23px;font-size:10.6px;color:#333;">$0.00</div>
<div class="t" style="left:1156px;width:600px;text-align:center;top:583.23px;font-size:10.6px;color:#333;">$0</div>
<div class="t " style="left:470px;top:604.33px;font-size:9.3px;color:#555;">paid search</div>
<div class="t " style="left:581.5px;top:604.33px;font-size:9.3px;color:#555;">paid search</div>
<div class="t " style="left:689.4px;top:604.33px;font-size:9.3px;color:#555;">bing ads</div>
<div class="t" style="left:781px;width:600px;text-align:center;top:603.23px;font-size:10.6px;color:#333;">0</div>
<div class="t" style="left:905.5px;width:600px;text-align:center;top:603.23px;font-size:10.6px;color:#333;">$0.00</div>
<div class="t" style="left:1031px;width:600px;text-align:center;top:603.23px;font-size:10.6px;color:#333;">$0.00</div>
<div class="t" style="left:1156px;width:600px;text-align:center;top:603.23px;font-size:10.6px;color:#333;">$0</div>
<div class="t " style="left:689.4px;top:624.33px;font-size:9.3px;color:#555;">capterra</div>
<div class="t" style="left:781px;width:600px;text-align:center;top:623.23px;font-size:10.6px;color:#333;">0</div>
<div class="t" style="left:905.5px;width:600px;text-align:center;top:623.23px;font-size:10.6px;color:#333;">$1,371.25</div>
<div class="t" style="left:1031px;width:600px;text-align:center;top:623.23px;font-size:10.6px;color:#333;">$1,494.66</div>
<div class="t" style="left:1156px;width:600px;text-align:center;top:623.23px;font-size:10.6px;color:#333;">$0</div>
<div class="t " style="left:689.4px;top:644.33px;font-size:9.3px;color:#555;">google adwords</div>
<div class="t" style="left:781px;width:600px;text-align:center;top:643.23px;font-size:10.6px;color:#333;">155,876</div>
<div class="t" style="left:905.5px;width:600px;text-align:center;top:643.23px;font-size:10.6px;color:#333;">$41,849.89</div>
<div class="t" style="left:1031px;width:600px;text-align:center;top:643.23px;font-size:10.6px;color:#333;">$46,662.63</div>
<div class="t" style="left:1156px;width:600px;text-align:center;top:643.23px;font-size:10.6px;color:#333;">$0</div>
<div class="t " style="left:470px;top:664.33px;font-size:9.3px;color:#555;">paid social</div>
<div class="t " style="left:581.5px;top:664.33px;font-size:9.3px;color:#555;">paid social</div>
<div class="t " style="left:689.4px;top:664.33px;font-size:9.3px;color:#555;">audience network</div>
<div class="t" style="left:781px;width:600px;text-align:center;top:663.23px;font-size:10.6px;color:#333;">52,348</div>
<div class="t" style="left:905.5px;width:600px;text-align:center;top:663.23px;font-size:10.6px;color:#333;">$1,952.96</div>
<div class="t" style="left:1031px;width:600px;text-align:center;top:663.23px;font-size:10.6px;color:#333;">$2,167.78</div>
<div class="t" style="left:1156px;width:600px;text-align:center;top:663.23px;font-size:10.6px;color:#333;">$0</div>
<div class="t " style="left:689.4px;top:684.33px;font-size:9.3px;color:#555;">facebook</div>
<div class="t" style="left:781px;width:600px;text-align:center;top:683.23px;font-size:10.6px;color:#333;">1,287,942</div>
<div class="t" style="left:905.5px;width:600px;text-align:center;top:683.23px;font-size:10.6px;color:#333;">$5,400.11</div>
<div class="t" style="left:1031px;width:600px;text-align:center;top:683.23px;font-size:10.6px;color:#333;">$5,994.12</div>
<div class="t" style="left:1156px;width:600px;text-align:center;top:683.23px;font-size:10.6px;color:#333;">$0</div>
<div class="t " style="left:689.4px;top:704.33px;font-size:9.3px;color:#555;">instagram</div>
<div class="t" style="left:781px;width:600px;text-align:center;top:703.23px;font-size:10.6px;color:#333;">1,249,809</div>
<div class="t" style="left:905.5px;width:600px;text-align:center;top:703.23px;font-size:10.6px;color:#333;">$4,487.72</div>
<div class="t" style="left:1031px;width:600px;text-align:center;top:703.23px;font-size:10.6px;color:#333;">$4,981.37</div>
<div class="t" style="left:1156px;width:600px;text-align:center;top:703.23px;font-size:10.6px;color:#333;">$0</div>
<div class="t " style="left:689.4px;top:724.33px;font-size:9.3px;color:#555;">linkedin</div>
<div class="t" style="left:781px;width:600px;text-align:center;top:723.23px;font-size:10.6px;color:#333;">221,043</div>
<div class="t" style="left:905.5px;width:600px;text-align:center;top:723.23px;font-size:10.6px;color:#333;">$10,564.54</div>
<div class="t" style="left:1031px;width:600px;text-align:center;top:723.23px;font-size:10.6px;color:#333;">$11,726.64</div>
<div class="t" style="left:1156px;width:600px;text-align:center;top:723.23px;font-size:10.6px;color:#333;">$0</div>
<div class="t " style="left:689.4px;top:744.33px;font-size:9.3px;color:#555;">messenger</div>
<div class="t" style="left:781px;width:600px;text-align:center;top:743.23px;font-size:10.6px;color:#333;">682</div>
<div class="t" style="left:905.5px;width:600px;text-align:center;top:743.23px;font-size:10.6px;color:#333;">$0.52</div>
<div class="t" style="left:1031px;width:600px;text-align:center;top:743.23px;font-size:10.6px;color:#333;">$0.57</div>
<div class="t" style="left:1156px;width:600px;text-align:center;top:743.23px;font-size:10.6px;color:#333;">$0</div>
<div class="t " style="left:689.4px;top:764.33px;font-size:9.3px;color:#555;">tiktok</div>
<div class="t" style="left:781px;width:600px;text-align:center;top:763.23px;font-size:10.6px;color:#333;">0</div>
<div class="t" style="left:905.5px;width:600px;text-align:center;top:763.23px;font-size:10.6px;color:#333;">$0.00</div>
<div class="t" style="left:1031px;width:600px;text-align:center;top:763.23px;font-size:10.6px;color:#333;">$0.00</div>
<div class="t" style="left:1156px;width:600px;text-align:center;top:763.23px;font-size:10.6px;color:#333;">$0</div>
<div class="t " style="left:689.4px;top:784.33px;font-size:9.3px;color:#555;">unclassified</div>
<div class="t" style="left:781px;width:600px;text-align:center;top:783.23px;font-size:10.6px;color:#333;">0</div>
<div class="t" style="left:905.5px;width:600px;text-align:center;top:783.23px;font-size:10.6px;color:#333;">$0.00</div>
<div class="t" style="left:1031px;width:600px;text-align:center;top:783.23px;font-size:10.6px;color:#333;">$0.00</div>
<div class="t" style="left:1156px;width:600px;text-align:center;top:783.23px;font-size:10.6px;color:#333;">$0</div>
<div class="t " style="left:470px;top:804.33px;font-size:9.3px;color:#555;">programmatic</div>
<div class="t " style="left:581.5px;top:804.33px;font-size:9.3px;color:#555;">display</div>
<div class="t " style="left:689.4px;top:804.33px;font-size:9.3px;color:#555;">bidtellect</div>
<div class="t" style="left:781px;width:600px;text-align:center;top:803.23px;font-size:10.6px;color:#333;">903,247</div>
<div class="t" style="left:905.5px;width:600px;text-align:center;top:803.23px;font-size:10.6px;color:#333;">$3,392.05</div>
<div class="t" style="left:1031px;width:600px;text-align:center;top:803.23px;font-size:10.6px;color:#333;">$3,837.44</div>
<div class="t" style="left:1156px;width:600px;text-align:center;top:803.23px;font-size:10.6px;color:#333;">$0</div>
<div class="t " style="left:689.4px;top:824.33px;font-size:9.3px;color:#555;">css-tricks</div>
<div class="t" style="left:781px;width:600px;text-align:center;top:823.23px;font-size:10.6px;color:#333;">24</div>
<div class="t" style="left:905.5px;width:600px;text-align:center;top:823.23px;font-size:10.6px;color:#333;">$0.00</div>
<div class="t" style="left:1031px;width:600px;text-align:center;top:823.23px;font-size:10.6px;color:#333;">$0.00</div>
<div class="t" style="left:1156px;width:600px;text-align:center;top:823.23px;font-size:10.6px;color:#333;">$0</div>
<div class="t " style="left:689.4px;top:844.33px;font-size:9.3px;color:#555;">kargo</div>
<div class="t" style="left:781px;width:600px;text-align:center;top:843.23px;font-size:10.6px;color:#333;">593,684</div>
<div class="t" style="left:905.5px;width:600px;text-align:center;top:843.23px;font-size:10.6px;color:#333;">$0.00</div>
<div class="t" style="left:1031px;width:600px;text-align:center;top:843.23px;font-size:10.6px;color:#333;">$0.00</div>
<div class="t" style="left:1156px;width:600px;text-align:center;top:843.23px;font-size:10.6px;color:#333;">$0</div>
<div class="t " style="left:689.4px;top:864.33px;font-size:9.3px;color:#555;">padsquad</div>
<div class="t" style="left:781px;width:600px;text-align:center;top:863.23px;font-size:10.6px;color:#333;">275,820</div>
<div class="t" style="left:905.5px;width:600px;text-align:center;top:863.23px;font-size:10.6px;color:#333;">$0.00</div>
<div class="t" style="left:1031px;width:600px;text-align:center;top:863.23px;font-size:10.6px;color:#333;">$0.00</div>
<div class="t" style="left:1156px;width:600px;text-align:center;top:863.23px;font-size:10.6px;color:#333;">$0</div>
<div class="t " style="left:689.4px;top:884.33px;font-size:9.3px;color:#555;">the trade desk</div>
<div class="t" style="left:781px;width:600px;text-align:center;top:883.23px;font-size:10.6px;color:#333;">3,757,817</div>
<div class="t" style="left:905.5px;width:600px;text-align:center;top:883.23px;font-size:10.6px;color:#333;">$0.00</div>
<div class="t" style="left:1031px;width:600px;text-align:center;top:883.23px;font-size:10.6px;color:#333;">$300.63</div>
<div class="t" style="left:1156px;width:600px;text-align:center;top:883.23px;font-size:10.6px;color:#333;">$0</div>
<div class="a" style="left:1019px;top:494px;width:1.2px;height:397px;background:#d4d4d4"></div>
<div class="a" style="left:464px;top:892px;width:1071px;height:6px;background:#fff"></div>
<div class="a" style="left:464px;top:891.2px;width:1071px;height:1.2px;background:#dedede"></div>
<div class="a" style="left:471px;top:928px;width:254.5px;height:234.5px;background:#000"></div>
<div class="a" style="left:473px;top:928px;width:250.5px;height:22px;background:#0d203b"></div>
<div class="a" style="left:473px;top:950px;width:250.5px;height:69.5px;background:#f3f3f3"></div>
<div class="t" style="left:298px;width:600px;text-align:center;top:935.03px;font-size:11.9px;color:#fff;font-weight:bold;">Comparisons</div>
<div class="t " style="left:477px;top:956.13px;font-size:11.9px;color:#333;font-weight:bold;">Current Period:</div>
<div class="t " style="left:567.5px;top:957.40px;font-size:10.4px;color:#444;">This Month</div>
<div class="t " style="left:477px;top:968.71px;font-size:9.2px;color:#444;">11/1/2023 - 11/30/2023</div>
<div class="t " style="left:476px;top:992.91px;font-size:11.8px;color:#333;font-weight:bold;">Comparison:</div>
<div class="a" style="left:559.2px;top:982.4px;width:157.2px;height:19.3px;background:#fff;border:1px solid #c9c9c9;box-shadow:0 1px 0 #e2e2e2"></div>
<div class="t " style="left:563px;top:987.27px;font-size:10.9px;color:#333;">Previous Period</div>
<svg class="a" style="left:702.75px;top:990.2px;" width="6.5" height="4" viewBox="0 0 6.5 4"><path d="M0 0 H6.5 L3.25 4 Z" fill="#333"/></svg>
<div class="t " style="left:477px;top:1007.71px;font-size:9.2px;color:#444;">10/1/2023 - 10/2/2023</div>
<div class="a" style="left:473px;top:1019.2px;width:250.5px;height:16.7px;background:#0d203b"></div>
<div class="t" style="left:227px;width:600px;text-align:center;top:1025.49px;font-size:8.4px;color:#fff;font-weight:bold;">Metrics</div>
<div class="t" style="left:307.79999999999995px;width:600px;text-align:center;top:1025.49px;font-size:8.4px;color:#fff;font-weight:bold;">Current</div>
<div class="t" style="left:358.79999999999995px;width:600px;text-align:center;top:1025.40px;font-size:8.5px;color:#fff;font-weight:bold;">Past</div>
<div class="t" style="left:403px;width:600px;text-align:center;top:1025.40px;font-size:8.5px;color:#fff;font-weight:bold;">Δ%</div>
<div class="a" style="left:473px;top:1035.9px;width:250.5px;height:39.8px;background:#f3f3f3"></div>
<div class="a" style="left:473px;top:1078.3px;width:250.5px;height:40.1px;background:#f3f3f3"></div>
<div class="a" style="left:473px;top:1121.1px;width:250.5px;height:38.5px;background:#f3f3f3"></div>
<div class="a" style="left:583.6px;top:1035.9px;width:1.7px;height:123.7px;background:#3d3d3d"></div>
<div class="a" style="left:633.2px;top:1035.9px;width:1.7px;height:123.7px;background:#3d3d3d"></div>
<div class="a" style="left:683.5px;top:1035.9px;width:1.7px;height:123.7px;background:#3d3d3d"></div>
<div class="a" style="left:476px;top:1046.1px;width:104.7px;height:19.8px;background:#fff;border:1px solid #c9c9c9;box-shadow:0 1px 0 #e2e2e2"></div>
<div class="t " style="left:480px;top:1051.47px;font-size:10.9px;color:#333;">Media Spend</div>
<svg class="a" style="left:567.65px;top:1054.8px;" width="6.5" height="4" viewBox="0 0 6.5 4"><path d="M0 0 H6.5 L3.25 4 Z" fill="#333"/></svg>
<div class="t" style="left:309px;width:600px;text-align:center;top:1054.34px;font-size:12px;color:#333;">$77.K</div>
<div class="t" style="left:359px;width:600px;text-align:center;top:1054.34px;font-size:12px;color:#333;">$161K</div>
<div class="t" style="left:403.6px;width:600px;text-align:center;top:1055.53px;font-size:10.6px;color:#444;">-52%</div>
<svg class="a" style="left:700.8px;top:1046.1px;" width="6" height="5" viewBox="0 0 6 5"><path d="M0 0 H6 L3 5 Z" fill="#e0525a"/></svg>
<div class="a" style="left:476px;top:1088.4px;width:104.7px;height:19.8px;background:#fff;border:1px solid #c9c9c9;box-shadow:0 1px 0 #e2e2e2"></div>
<div class="t " style="left:480px;top:1093.77px;font-size:10.9px;color:#333;">New Paid Boo…</div>
<svg class="a" style="left:567.65px;top:1097.1000000000001px;" width="6.5" height="4" viewBox="0 0 6.5 4"><path d="M0 0 H6.5 L3.25 4 Z" fill="#333"/></svg>
<div class="t" style="left:309px;width:600px;text-align:center;top:1096.64px;font-size:12px;color:#333;">$0</div>
<div class="t" style="left:359px;width:600px;text-align:center;top:1096.64px;font-size:12px;color:#333;">$67.K</div>
<div class="t" style="left:403.6px;width:600px;text-align:center;top:1097.83px;font-size:10.6px;color:#444;">-100%</div>
<svg class="a" style="left:700.8px;top:1088.4px;" width="6" height="5" viewBox="0 0 6 5"><path d="M0 0 H6 L3 5 Z" fill="#e0525a"/></svg>
<div class="a" style="left:476px;top:1131.3px;width:104.7px;height:19.8px;background:#fff;border:1px solid #c9c9c9;box-shadow:0 1px 0 #e2e2e2"></div>
<div class="t " style="left:480px;top:1136.67px;font-size:10.9px;color:#333;">Pipeline</div>
<svg class="a" style="left:567.65px;top:1140.0px;" width="6.5" height="4" viewBox="0 0 6.5 4"><path d="M0 0 H6.5 L3.25 4 Z" fill="#333"/></svg>
<div class="t" style="left:309px;width:600px;text-align:center;top:1139.04px;font-size:12px;color:#333;">$0</div>
<div class="t" style="left:359px;width:600px;text-align:center;top:1139.04px;font-size:12px;color:#333;">$14.K</div>
<div class="t" style="left:403.6px;width:600px;text-align:center;top:1140.23px;font-size:10.6px;color:#444;">-100%</div>
<svg class="a" style="left:700.8px;top:1131.3px;" width="6" height="5" viewBox="0 0 6 5"><path d="M0 0 H6 L3 5 Z" fill="#e0525a"/></svg>
<div class="t " style="left:733.7px;top:906.56px;font-size:16px;color:#444;">Daily New Paid Bookings</div>
<div class="t " style="left:917.8px;top:911.04px;font-size:10.7px;color:#444;">over</div>
<div class="t " style="left:944.3px;top:906.73px;font-size:15.8px;color:#444;">Media Spend</div>
<div class="t " style="left:1043.3px;top:911.04px;font-size:10.7px;color:#444;">by</div>
<div class="t " style="left:1059.8px;top:906.64px;font-size:15.9px;color:#444;">Media Channel</div>
<div class="a" style="left:794px;top:974.8px;width:710px;height:1px;background:#e6e6e6"></div>
<div class="a" style="left:794px;top:1022.7px;width:710px;height:1px;background:#e6e6e6"></div>
<div class="a" style="left:794px;top:1071.8px;width:710px;height:1px;background:#e6e6e6"></div>
<div class="t" style="left:187.20000000000005px;width:600px;text-align:right;top:969.51px;font-size:11.8px;color:#666;">60K</div>
<div class="a" style="left:789.5px;top:974.6999999999999px;width:4px;height:1.3px;background:#333"></div>
<div class="t" style="left:187.20000000000005px;width:600px;text-align:right;top:1017.41px;font-size:11.8px;color:#666;">40K</div>
<div class="a" style="left:789.5px;top:1022.6px;width:4px;height:1.3px;background:#333"></div>
<div class="t" style="left:187.20000000000005px;width:600px;text-align:right;top:1066.51px;font-size:11.8px;color:#666;">20K</div>
<div class="a" style="left:789.5px;top:1071.7px;width:4px;height:1.3px;background:#333"></div>
<div class="t" style="left:187.20000000000005px;width:600px;text-align:right;top:1107.51px;font-size:11.8px;color:#666;">0K</div>
<div class="t" style="left:715px;top:1039px;width:70px;text-align:center;font-size:12px;color:#555;transform:rotate(-90deg);transform-origin:35px 6px">Media Spend</div>
<div class="a" style="left:837.5px;top:940.6px;width:266.4px;height:179px;background:#0e2040"></div>
<div class="a" style="left:1193px;top:1112.1px;width:267px;height:8px;background:#0e2040"></div>
<div class="a" style="left:970.5px;top:1024.5px;width:356px;height:3px;background:#5cc75c"></div>
<div class="a" style="left:967px;top:1022.5px;width:7px;height:7px;border-radius:50%;background:#5cc75c"></div>
<div class="a" style="left:1323px;top:1022.5px;width:7px;height:7px;border-radius:50%;background:#5cc75c"></div>
<div class="t " style="left:1504.6px;top:1019.60px;font-size:13px;color:#333;">-0</div>
<div class="t" style="left:671px;width:600px;text-align:center;top:1126.43px;font-size:10.6px;color:#555;">11/1/23</div>
<div class="t" style="left:1026.8px;width:600px;text-align:center;top:1126.43px;font-size:10.6px;color:#555;">11/2/23</div>
<div class="a" style="left:1516px;top:1128px;width:58px;height:58px;border-radius:24px;background:#07a2b5;box-shadow:0 2px 6px rgba(0,0,0,0.15)"></div>
<svg class="a" style="left:1520px;top:1130px;" width="50" height="50" viewBox="0 0 50 50"><g transform="translate(26.6 34.1) rotate(-13.5)" fill="#fff"><path d="M -12.2 0 C -9 -2.5 -7.2 -6 -7.2 -12 C -7.2 -18 -4 -21.5 0 -21.5 C 4 -21.5 7.2 -18 7.2 -12 C 7.2 -6 9 -2.5 12.2 0 Z"/><path d="M -3.3 2 A 3.3 3 0 0 0 3.3 2 Z"/></g></svg>
</body></html>
